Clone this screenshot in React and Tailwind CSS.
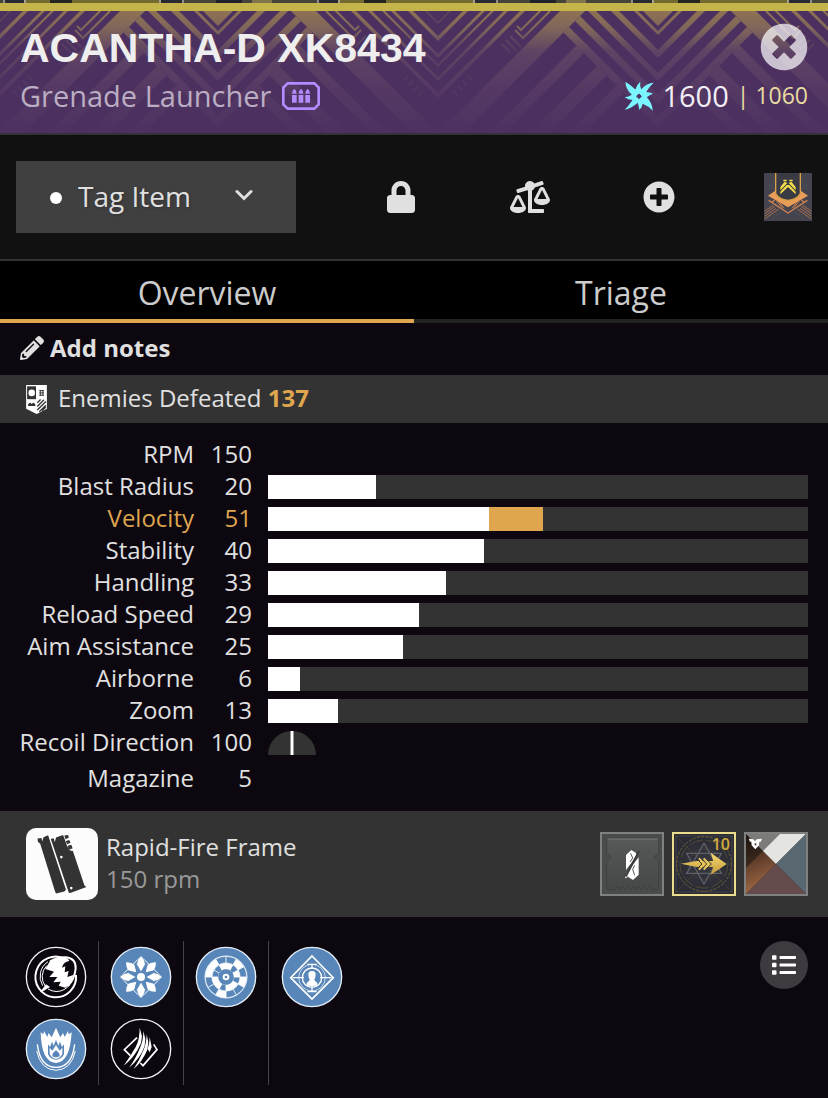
import React from "react";
import { FaBalanceScaleLeft, FaList, FaLock, FaPencilAlt, FaPlusCircle, FaTimesCircle } from "react-icons/fa";

const stats = [
  { name: "RPM", value: 150 },
  { name: "Blast Radius", value: 20, bar: 20 },
  { name: "Velocity", value: 51, bar: 41, bonus: 10 },
  { name: "Stability", value: 40, bar: 40 },
  { name: "Handling", value: 33, bar: 33 },
  { name: "Reload Speed", value: 29, bar: 28 },
  { name: "Aim Assistance", value: 25, bar: 25 },
  { name: "Airborne", value: 6, bar: 6 },
  { name: "Zoom", value: 13, bar: 13 },
  { name: "Recoil Direction", value: 100, recoil: true },
  { name: "Magazine", value: 5 },
];

/* Half of the repeating chevron motif, 220 units wide. */
function ChevronHalf() {
  const bigV = [[31, 35], [50, 58], [73, 81], [94, 104], [116, 127]];
  const smallV = [[36, 41], [54, 58], [64, 67], [77, 81], [93, 98]];
  const beams = [[184, 199], [225, 244], [264, 278]];
  return (
    <g fill="url(#gilt)">
      <path d="M220 26L200 6H220Z" />
      {bigV.map(([a, b]) => (
        <polygon key={a} points={`220,${a} 220,${b} ${(378 - b) / 2},${(b - 62) / 2} ${(378 - a) / 2},${(a - 62) / 2}`} />
      ))}
      {smallV.map(([a, b]) => (
        <polygon key={a} points={`0,${a} 0,${b} ${b - 6},6 ${a - 6},6`} />
      ))}
      <path d="M0 22L16 6h2L0 24Z" opacity=".35" />
      <path d="M127 6H152L24 134H-1Z" />
      {beams.map(([a, b]) => (
        <polygon key={a} points={`${(a + 93) / 2},${(a - 93) / 2} ${(b + 93) / 2},${(b - 93) / 2} ${b - 134},134 ${a - 134},134`} />
      ))}
      <g fill="none" stroke="url(#gilt)" strokeWidth="2">
        <path d="M104 9L83 30L79 26" />
        <path d="M112 11L85 38L77 30" />
        <path d="M72 36l11 11M68 40l11 11M64 44l9 9" opacity=".5" />
        <path d="M30 76l4 4M25 81l4 4M20 86l4 4M15 91l4 4" opacity=".7" />
      </g>
    </g>
  );
}

function HeaderPattern() {
  return (
    <svg className="absolute inset-0 h-full w-full" aria-hidden="true">
      <defs>
        <linearGradient id="gilt" gradientUnits="userSpaceOnUse" x1="0" y1="11" x2="0" y2="134">
          <stop offset="0" stopColor="#8e7253" />
          <stop offset=".14" stopColor="#80665a" />
          <stop offset=".33" stopColor="#5e4365" />
          <stop offset=".65" stopColor="#553964" />
          <stop offset="1" stopColor="#4d3161" />
        </linearGradient>
        <pattern id="chevrons" patternUnits="userSpaceOnUse" x="-2" y="-11" width="440" height="160">
          <ChevronHalf />
          <g transform="translate(440 0) scale(-1 1)">
            <ChevronHalf />
          </g>
        </pattern>
      </defs>
      <rect width="100%" height="100%" fill="url(#chevrons)" />
    </svg>
  );
}

function TopStrip() {
  return (
    <svg className="block h-[3px] w-full bg-[#292a31]" aria-hidden="true">
      <defs>
        <pattern id="tiles" patternUnits="userSpaceOnUse" x="24" width="314" height="3">
          <rect width="137" height="3" fill="#a3a08c" />
          <rect x="2" width="133" height="3" fill="#736a31" />
          <rect x="26" width="22" height="3" fill="#25251f" />
          <rect x="158" width="137" height="3" fill="#8e8e8c" />
          <rect x="160" width="133" height="3" fill="#45433a" />
          <rect x="192" width="26" height="3" fill="#20222a" />
          <rect x="228" width="20" height="3" fill="#80744a" />
        </pattern>
      </defs>
      <rect width="100%" height="3" fill="url(#tiles)" />
    </svg>
  );
}

function AmmoIcon() {
  return (
    <svg viewBox="0 0 114 84" className="h-7 w-[38px]" aria-label="Special ammo" role="img">
      <path d="M17 4H97L110 17V67L97 80H17L4 67V17Z" fill="none" stroke="#b08cff" strokeWidth="8" />
      {[30, 50, 70].map((x) => (
        <path key={x} fill="#b08cff" d={`M${x} 35q0-9 7-15q7 6 7 15zM${x} 39h14v23h-14z`} />
      ))}
    </svg>
  );
}

function ArcIcon() {
  return (
    <svg viewBox="0 0 92 92" className="h-[30px] w-[30px]" aria-label="Arc" role="img">
      <path
        fill="#7af5ff"
        fillRule="evenodd"
        d="M4 2Q20 11 35 26Q38 12 50 2Q48 14 53 25Q70 6 91 5Q79 15 68 34Q79 34 89 39Q78 43 70 50Q87 67 88 91Q77 78 57 70Q56 82 47 89Q46 78 42 67Q24 84 2 88Q13 78 26 58Q12 58 2 50Q14 49 24 42Q6 26 4 2ZM46 38L37 47L46 56L55 47Z"
      />
    </svg>
  );
}

function CrestIcon() {
  return (
    <svg viewBox="0 0 144 144" className="h-12 w-12" aria-hidden="true">
      <rect width="144" height="144" fill="#43444e" />
      <path d="M0 60L60 0M0 130L130 0M20 144L144 20M84 0L144 60M14 0L144 130M0 20L124 144" stroke="#50515b" strokeWidth="2" />
      <path d="M12 68L36 52Q42 79 72 83Q102 79 108 52L132 68L72 103Z" fill="#ea9d58" />
      <path d="M35 0V62Q46 81 72 82Q98 81 109 62V0" fill="#393a43" stroke="#dba14a" strokeWidth="4" />
      <path d="M14 82L72 120L130 82M22 89l10-8M122 89l-10-8" fill="none" stroke="#cf8053" strokeWidth="4" />
      <path d="M2 138L44 108M2 130L36 106M2 122L32 100M2 114L26 98M142 138L100 108M142 130L108 106M142 122L112 100M142 114L118 98" stroke="#a96b50" strokeWidth="3" />
      <path d="M38 84l16 20M46 88l14 18M106 84L90 104M98 88L84 106" stroke="#cf8053" strokeWidth="3" />
      <path d="M49 42L62 26L70 30L49 52ZM95 42L82 26L74 30L95 52ZM49 56L68 36H76L95 56V64L72 42L49 64ZM58 20h10v5H58zM76 20h10v5H76z" fill="#f4dd4a" />
    </svg>
  );
}

function TrackerIcon() {
  return (
    <svg viewBox="0 0 63 88" className="h-[29px] w-[21px]" aria-hidden="true">
      <path d="M0 0H63V72L32 88L0 72Z" fill="#fff" />
      <path d="M3 4H30V43H3Z" fill="#333" />
      <circle cx="17" cy="24" r="10" fill="#fff" />
      <path d="M40 17h14M40 24h14M40 31h14M43 15v18M51 15v18" stroke="#333" strokeWidth="3" />
      <path d="M6 64V60Q8 54 13 54L17 58L21 54Q26 54 28 60V64Z" fill="#333" />
      <path d="M34 54L44 44M34 65L54 45M34 76L60 50M40 81L60 61M48 78L60 67" stroke="#333" strokeWidth="4" />
    </svg>
  );
}

function MagazineIcon() {
  return (
    <svg viewBox="0 0 218 218" className="h-[72px] w-[72px] rounded-[10px] bg-[#fcfcfc]" aria-hidden="true">
      <g fill="#333">
        <path d="M35 32L47 30L49 41L53 28L67 22L121 187L116 192L91 198L88 192L43 48L36 42Z" />
        <path d="M75 33L84 31L87 43L91 29L112 21L116 30L124 54L133 68L142 70L177 174L183 179L136 196L130 197L78 42Z" />
        <path d="M116 23L127 21L130 29L120 34ZM121 39L131 36L135 45L124 49ZM126 54L137 51L141 61L130 66Z" />
      </g>
      <circle cx="107" cy="88" r="4" fill="#fcfcfc" />
      <circle cx="137" cy="182" r="4" fill="#fcfcfc" />
    </svg>
  );
}

function EmptyModIcon() {
  return (
    <svg viewBox="0 0 180 180" className="h-full w-full" aria-hidden="true">
      <defs>
        <linearGradient id="card" x2="0" y2="1">
          <stop stopColor="#565958" />
          <stop offset="1" stopColor="#454847" />
        </linearGradient>
      </defs>
      <rect width="180" height="180" fill="#4a4c4b" />
      <path d="M14 20Q14 13 21 13H163Q170 13 170 20V58L158 66V72L170 80V160Q170 168 162 168H148L142 158L134 168L126 158L118 168L110 158L102 168L94 158L86 168L78 158L70 168L62 158L54 168L46 158L38 168H22Q14 168 14 160V80L26 72V66L14 58Z" fill="url(#card)" stroke="#3a3c3c" strokeWidth="2" />
      <path d="M17 15H167" stroke="#7b7f7e" strokeWidth="3" />
      <path d="M72 63L88 48L101 56L105 64L72 108ZM73 118L110 70V122L93 138L74 126Z" fill="#fff" />
      <path d="M86 58L92 72L84 84M98 94L92 106L98 124" stroke="#555" strokeWidth="3" fill="none" />
      <path d="M70 130L111 52" stroke="#3c3e3e" strokeWidth="6" />
      <circle cx="72" cy="130" r="3" fill="#ddd" />
    </svg>
  );
}

function MasterworkIcon() {
  return (
    <svg viewBox="0 0 180 180" className="h-full w-full" aria-hidden="true">
      <defs>
        <radialGradient id="well">
          <stop stopColor="#373740" />
          <stop offset="1" stopColor="#2a2b34" />
        </radialGradient>
        <linearGradient id="arrow" x2="0" y2="1">
          <stop stopColor="#f5dc6f" />
          <stop offset="1" stopColor="#c4993b" />
        </linearGradient>
      </defs>
      <rect width="180" height="180" fill="url(#well)" />
      <path d="M2 2L178 178M178 2L2 178" stroke="#4d4735" strokeWidth="2" />
      <path d="M6 6H174V174H6Z" stroke="#52525a" strokeWidth="2" fill="none" />
      <circle cx="90" cy="90" r="82" fill="none" stroke="#6d6137" strokeWidth="3" strokeDasharray="9 4" />
      <circle cx="90" cy="90" r="72" fill="none" stroke="#625834" strokeWidth="2" strokeDasharray="40 9" />
      <circle cx="90" cy="90" r="46" fill="none" stroke="#453f38" strokeWidth="2" />
      <path d="M90 28L142 118H38ZM90 150L38 58H142Z" fill="none" stroke="#5e5f67" strokeWidth="4" />
      <path d="M20 89L68 81H118L110 56L158 90L110 123L118 99H68Z" fill="url(#arrow)" />
      <path d="M68 74L84 90L68 106M82 74L98 90L82 106M96 74L112 90L96 106" fill="none" stroke="#352e27" strokeWidth="3" />
      <path d="M75 73L91 90L75 107M89 73L105 90L89 107" fill="none" stroke="#e5c65c" strokeWidth="6" />
    </svg>
  );
}

function ShaderIcon() {
  return (
    <svg viewBox="0 0 180 180" className="h-full w-full" aria-hidden="true">
      <defs>
        <linearGradient id="rust" x1=".2" y1="0" x2=".4" y2="1">
          <stop stopColor="#24170f" />
          <stop offset=".5" stopColor="#68432e" />
          <stop offset="1" stopColor="#a56d45" />
        </linearGradient>
      </defs>
      <path d="M0 0L90 90L0 180Z" fill="url(#rust)" />
      <path d="M0 0H180L90 90Z" fill="#e4e4e3" />
      <path d="M180 0V180L90 90Z" fill="#596770" />
      <path d="M0 180H180L90 90Z" fill="#654b4c" />
      <path d="M0 0H102L0 102Z" fill="#14110f" opacity=".5" />
      <path d="M8 14L22 16L27 22L32 16L48 14L44 23H40L39 34L28 46L17 34L16 23H12Z" fill="#fff" />
      <path d="M26 28h5v6h-5z" fill="#333" />
    </svg>
  );
}

function ImpactCasing() {
  return (
    <g fill="none" stroke="#fff">
      <path d="M118 36A61 61 0 1 0 150 84" strokeWidth="6" />
      <path d="M66 44A53 53 0 0 0 50 116M62 56A48 48 0 0 0 58 118" strokeWidth="3" />
      <path d="M66 126Q90 140 114 128Q130 120 138 102" strokeWidth="3" />
      <path d="M72 44Q92 30 120 31Q150 34 149 64Q146 98 124 118" strokeWidth="6" />
      <path d="M72 42Q90 33 112 31Q128 34 130 42Q112 44 108 62L118 58L116 76L128 72L124 90L142 84Q138 108 118 122L98 116L104 104L82 106L94 90L70 90L84 74L58 66Z" fill="#fff" stroke="none" />
      <path d="M42 136L60 112L72 120L56 130Z" fill="#fff" stroke="none" />
    </g>
  );
}

function Petals() {
  return (
    <g fill="#fff">
      <path d="M90 28L152 90L90 152L28 90Z" fill="none" stroke="#fff" strokeWidth="3" />
      {[45, 135, 225, 315].map((a) => (
        <path key={a} d="M90 70L78 50Q78 38 90 27Q102 38 102 50Z" transform={`rotate(${a} 90 90)`} />
      ))}
      {[0, 90, 180, 270].map((a) => (
        <path key={a} d="M90 75L77 52Q78 37 90 26Q102 37 103 52Z" stroke="#5886b8" strokeWidth="2" transform={`rotate(${a} 90 90)`} />
      ))}
      <circle cx="90" cy="90" r="12" />
    </g>
  );
}

function wedge(r1, r2, from) {
  const at = (r, deg) => {
    const t = ((deg - 90) * Math.PI) / 180;
    return `${(90 + r * Math.cos(t)).toFixed(1)} ${(90 + r * Math.sin(t)).toFixed(1)}`;
  };
  return `M${at(r1, from)}L${at(r2, from)}A${r2} ${r2} 0 0 1 ${at(r2, from + 30)}L${at(r1, from + 30)}A${r1} ${r1} 0 0 0 ${at(r1, from)}Z`;
}

function Dartboard() {
  return (
    <g>
      <g fill="none" stroke="#dbe7f4" strokeWidth="2">
        {Array.from({ length: 12 }, (_, i) => (
          <path key={i} d={wedge(42, 62, i * 30)} />
        ))}
        {Array.from({ length: 12 }, (_, i) => (
          <path key={i} d={wedge(23, 42, i * 30)} />
        ))}
      </g>
      <circle cx="90" cy="90" r="63" fill="none" stroke="#e9f1f9" strokeWidth="3" />
      <g fill="#fff">
        {[30, 90, 180, 270, 300].map((a) => (
          <path key={a} d={wedge(42, 62, a)} />
        ))}
        {[0, 60, 120, 150, 210, 240, 330].map((a) => (
          <path key={a} d={wedge(23, 42, a)} />
        ))}
      </g>
      <circle cx="90" cy="90" r="23" fill="#5886b8" />
      <circle cx="90" cy="90" r="7" fill="none" stroke="#fff" strokeWidth="6" />
    </g>
  );
}

function Crosshair() {
  return (
    <g fill="none" stroke="#fff" strokeWidth="3">
      <path d="M90 27L154 92L90 156L26 92Z" strokeWidth="5" />
      <circle cx="90" cy="92" r="40" strokeWidth="2" />
      <circle cx="90" cy="92" r="29" strokeWidth="4" />
      <path d="M90 52V66M90 118V136M32 92H66M114 92H148M76 52H104M76 134H104" strokeWidth="4" />
      <path d="M90 72Q102 72 101 84Q100 94 97 97Q97 104 106 108V114Q90 122 74 114V108Q83 104 83 97Q80 94 79 84Q78 72 90 72Z" fill="#fff" stroke="none" />
    </g>
  );
}

function FlameCrown() {
  return (
    <g fill="none" stroke="#fff">
      <path d="M44 40L52 46L54 36L64 54L68 42L77 55L83 42L90 26L97 42L103 55L111 42L116 54L126 36L128 46L137 40Q132 130 90 132Q46 130 44 40Z" fill="#fff" stroke="none" />
      <path d="M66 106V76L72 84L78 68L83 80L90 62L97 80L102 68L108 84L114 76V106Q106 122 90 122Q74 122 66 106Z" fill="#5886b8" stroke="none" />
      <path d="M71 104V86L79 95L90 78L101 95L109 86V104Q102 119 90 119Q78 119 71 104Z" fill="#fff" stroke="none" />
      <path d="M79 112Q78 102 90 94Q102 102 101 112Q90 118 79 112Z" fill="#5886b8" stroke="none" />
      <path d="M34 76Q42 144 90 145Q138 144 146 76" strokeWidth="4" />
      <path d="M32 96Q44 152 90 154Q136 152 148 96" strokeWidth="3" />
    </g>
  );
}

function Claws() {
  return (
    <g fill="#fff">
      <path d="M78 56L40 92L58 110M128 76L138 92L96 140L88 132" fill="none" stroke="#fff" strokeWidth="5" />
      <path d="M86 26L93 52L90 72L80 92Q64 120 38 140Q58 112 74 84Q86 62 86 26Z" />
      <path d="M97 36L103 60L101 80Q90 116 54 146Q74 120 88 84Q97 64 97 36Z" />
      <path d="M107 46L112 70L109 92Q94 128 68 150Q86 122 98 92Q106 74 107 46Z" />
      <path d="M116 54L122 84L116 100L110 90Q116 72 116 54Z" />
    </g>
  );
}

function Perk({ label, active, children }) {
  return (
    <button type="button" aria-label={label} className="block rounded-full">
      <svg viewBox="-3 -3 186 186" className="h-[62px] w-[62px]" aria-hidden="true">
        <circle cx="90" cy="90" r="89" fill={active ? "#5886b8" : "#0d070f"} stroke={active ? "#e4eef8" : "#f4f4f4"} strokeWidth="4" />
        {children}
      </svg>
    </button>
  );
}

const perkColumns = [
  [
    { label: "Impact Casing", art: <ImpactCasing /> },
    { label: "Flame Crown", active: true, art: <FlameCrown /> },
  ],
  [
    { label: "Petals", active: true, art: <Petals /> },
    { label: "Claws", art: <Claws /> },
  ],
  [{ label: "Dartboard", active: true, art: <Dartboard /> }],
  [{ label: "Crosshair", active: true, art: <Crosshair /> }],
];

function Header() {
  return (
    <header className="relative border-b-2 border-[#35313a] bg-[#4c3160] px-5 py-[13px]">
      <HeaderPattern />
      <div className="relative flex h-12 items-center justify-between">
        <h1 className="font-['Liberation_Sans',Arial,sans-serif] text-[41px] leading-[48px] font-bold text-[#eeeeee]">ACANTHA-D XK8434</h1>
        <button type="button" aria-label="Close" className="pb-[2px] text-white/70">
          <FaTimesCircle className="h-12 w-12" />
        </button>
      </div>
      <div className="relative flex h-12 items-center justify-between">
        <div className="flex items-center gap-[11px] text-[29px] text-[#bbaec3]">
          <span>Grenade Launcher</span>
          <AmmoIcon />
        </div>
        <div className="flex items-center gap-2 text-[29px] text-[#f2eef5]">
          <ArcIcon />
          <span>1600</span>
          <span className="pb-[2px] text-[23px] text-[#e9dba0]">| 1060</span>
        </div>
      </div>
    </header>
  );
}

function ActionButton({ label, children }) {
  return (
    <button type="button" aria-label={label} className="flex h-12 w-12 items-center justify-center">
      {children}
    </button>
  );
}

function Actions() {
  return (
    <div className="flex items-center border-b-2 border-[#333333] bg-[#111111] px-4 py-[26px] text-[#e0e0e0]">
      <div className="relative w-[280px]">
        <select aria-label="Tag" className="block h-[72px] w-full appearance-none bg-[#404040] pb-[2px] pl-[62px] text-[28px] leading-[44px] text-[#e0e0e0] text-shadow-[1px_1px_3px_rgb(0_0_0_/_0.25)]">
          <option>Tag Item</option>
        </select>
        <span className="pointer-events-none absolute top-[31px] left-[34px] h-3 w-3 rounded-full bg-white" />
        <svg viewBox="0 0 18 12" className="pointer-events-none absolute top-7 right-[43px] h-3 w-[18px]" aria-hidden="true">
          <path d="M2 2.5L9 9.5L16 2.5" fill="none" stroke="#e0e0e0" strokeWidth="3" strokeLinecap="round" />
        </svg>
      </div>
      <div className="flex flex-1 items-center justify-between pl-[81px]">
        <ActionButton label="Lock"><FaLock className="h-8 w-7" /></ActionButton>
        <ActionButton label="Compare"><FaBalanceScaleLeft className="h-8 w-10" /></ActionButton>
        <ActionButton label="Add to loadout"><FaPlusCircle className="h-8 w-8" /></ActionButton>
        <ActionButton label="Crest"><CrestIcon /></ActionButton>
      </div>
    </div>
  );
}

function StatRow({ stat }) {
  const tone = stat.bonus ? "text-[#dfa64f]" : "text-[#e0e0e0]";
  return (
    <tr className={tone}>
      <th scope="row" className="h-8 w-[194px] p-0 text-right align-top leading-[30px] font-normal whitespace-nowrap">{stat.name}</th>
      <td className="w-[58px] p-0 text-right align-top leading-[30px]">{stat.value}</td>
      <td className="p-0 pr-5 pl-4">
        {stat.bar && (
          <div className="flex h-6 bg-[#333333]">
            <div className="bg-white" style={{ width: `${stat.bar}%` }} />
            {stat.bonus && <div className="bg-[#dfa64f]" style={{ width: `${stat.bonus}%` }} />}
          </div>
        )}
        {stat.recoil && (
          <svg viewBox="0 0 48 24" className="mt-1 mb-2 block h-6 w-12" aria-hidden="true">
            <path d="M0 24A24 24 0 0 1 48 24Z" fill="#333" />
            <path d="M24 0V24" stroke="#fff" strokeWidth="3" />
          </svg>
        )}
      </td>
    </tr>
  );
}

export default function App() {
  return (
    <main className="min-h-screen bg-[#0d070f] font-['Open_Sans',sans-serif] text-2xl leading-8 text-[#e0e0e0]">
      <TopStrip />
      <div className="h-2 bg-[#c4b449]" />
      <Header />
      <Actions />
      <div role="tablist" className="grid grid-cols-2 bg-black text-[32px] text-[#cccccc]">
        <button type="button" role="tab" aria-selected="true" className="h-[62px] border-b-4 border-[#dfa64f] pt-[6px]">Overview</button>
        <button type="button" role="tab" aria-selected="false" className="h-[62px] border-b-4 border-[#222222] pt-[6px]">Triage</button>
      </div>
      <button type="button" className="flex h-[52px] w-full items-center gap-[6px] px-5 pb-[2px] font-bold">
        <FaPencilAlt className="h-6 w-6" />
        Add notes
      </button>
      <div className="flex h-12 items-center gap-[11px] bg-[#333333] px-[26px]">
        <TrackerIcon />
        <p className="pb-[2px]">Enemies Defeated <strong className="text-[#dfa64f]">137</strong></p>
      </div>
      <table className="my-4 w-full border-collapse">
        <tbody>
          {stats.map((s) => <StatRow key={s.name} stat={s} />)}
        </tbody>
      </table>
      <section className="flex items-center gap-2 bg-[#333333] py-[17px] pr-5 pl-[26px]">
        <MagazineIcon />
        <div className="flex-1 pb-[2px]">
          <h2>Rapid-Fire Frame</h2>
          <p className="text-[#999999]">150 rpm</p>
        </div>
        <button type="button" aria-label="Empty mod socket" className="h-16 w-16 border-2 border-[#7f8080]"><EmptyModIcon /></button>
        <button type="button" aria-label="Masterwork" className="relative h-16 w-16 border-2 border-[#eade8b]">
          <MasterworkIcon />
          <span className="absolute top-0 right-1 text-base leading-5 font-semibold text-[#d0ac40]">10</span>
        </button>
        <button type="button" aria-label="Shader" className="h-16 w-16 border-2 border-[#7f8080]"><ShaderIcon /></button>
      </section>
      <section className="flex items-start justify-between pt-6 pr-5 pl-[14px]">
        <div className="flex divide-x divide-[#45424a]">
          {perkColumns.map((perks) => (
            <div key={perks[0].label} className="flex h-36 w-[85px] flex-col items-center gap-[10px] pt-[5px]">
              {perks.map((p) => <Perk key={p.label} label={p.label} active={p.active}>{p.art}</Perk>)}
            </div>
          ))}
        </div>
        <button type="button" aria-label="List view" className="flex h-12 w-12 items-center justify-center rounded-full bg-[#3e3a40] text-white">
          <FaList className="h-6 w-6" />
        </button>
      </section>
    </main>
  );
}
